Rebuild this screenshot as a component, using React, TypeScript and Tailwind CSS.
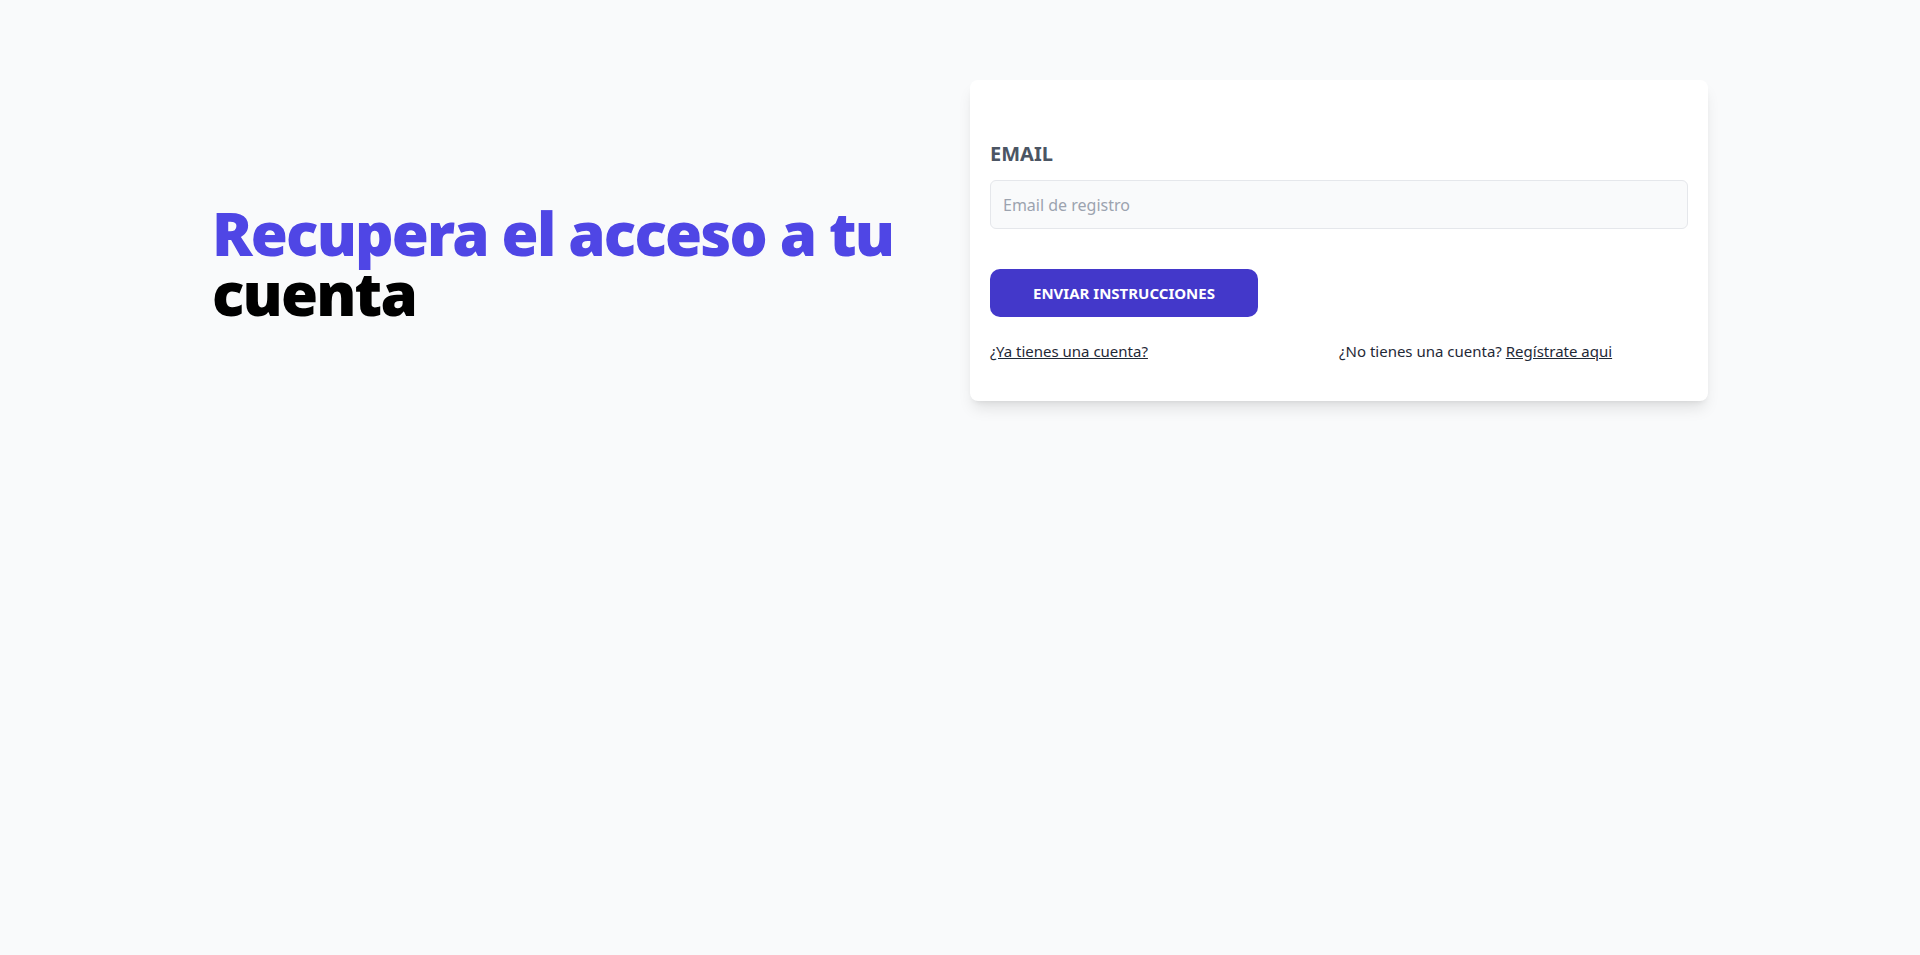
export default function App() {
  return (
    <div className="min-h-screen bg-gray-50 font-['Noto_Sans',sans-serif]">
      <main className="mx-auto max-w-[1536px] px-5 pt-20">
        <div className="grid grid-cols-2 gap-5">
          <div className="pt-[123px]">
            <h1 className="text-6xl leading-none font-black tracking-[-0.03em] text-[#4f46e5]">
              Recupera el acceso a tu <span className="text-black">cuenta</span>
            </h1>
          </div>

          <div className="rounded-lg bg-white px-5 pt-[60px] pb-10 shadow-lg">
            <form>
              <div>
                <label
                  htmlFor="email"
                  className="block text-xl leading-7 font-bold text-[#4b5563] uppercase"
                >
                  Email
                </label>
                <input
                  id="email"
                  type="email"
                  placeholder="Email de registro"
                  className="mt-3 h-[49px] w-full rounded-md border border-gray-200 bg-gray-50 px-3 text-base text-gray-700 placeholder:text-[#9ca3af] outline-none"
                />
              </div>

              <button
                type="button"
                className="mt-10 h-12 w-[268px] rounded-[10px] bg-[#4338ca] text-[15px] font-bold text-white uppercase"
              >
                Enviar instrucciones
              </button>
            </form>

            <nav className="mt-6 grid grid-cols-2 text-[15px] leading-5 text-[#1f2937]">
              <a href="#" className="underline">
                ¿Ya tienes una cuenta?
              </a>
              <p>
                ¿No tienes una cuenta?{' '}
                <a href="#" className="underline">
                  Regístrate aqui
                </a>
              </p>
            </nav>
          </div>
        </div>
      </main>
    </div>
  );
}
